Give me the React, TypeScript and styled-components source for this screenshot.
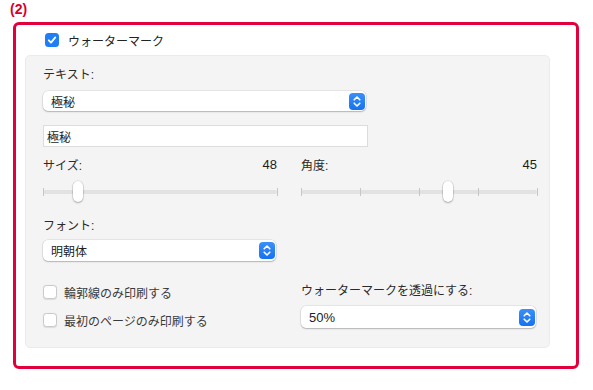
import { createGlobalStyle, styled } from "styled-components";

const GlobalStyle = createGlobalStyle`
  body {
    margin: 0;
    background: #ffffff;
    font-family: "Liberation Sans", "Noto Sans CJK JP", sans-serif;
    color: #262626;
  }
`;

const Page = styled.div`
  padding: 2px 0 0 10px;
`;

const StepLabel = styled.div`
  font-size: 14px;
  line-height: 14px;
  font-weight: 700;
  color: #d6002f;
`;

const Frame = styled.div`
  width: 525px;
  margin: 6px 0 0 3px;
  padding: 8px 26px 18px 9px;
  border: 3px solid #e2003c;
  border-radius: 6px;
`;

const HeaderRow = styled.label`
  display: flex;
  align-items: center;
  gap: 9px;
  padding-left: 20px;
  height: 14px;
  font-size: 12px;
  color: #222;
`;

const Panel = styled.div`
  margin-top: 8px;
  padding: 11px 12px 19px 17px;
  background: #f4f4f4;
  border: 1px solid #ebebeb;
  border-radius: 5px;
`;

const Label = styled.div`
  font-size: 12px;
  line-height: 16px;
  color: #2a2a2a;
`;

const SelectBox = styled.div<{ $width: number; $height?: number }>`
  display: flex;
  align-items: center;
  justify-content: space-between;
  width: ${(p) => p.$width}px;
  height: ${(p) => p.$height ?? 20}px;
  box-sizing: border-box;
  padding: 0 1px 0 8px;
  background: #fff;
  border-radius: 5px;
  box-shadow: 0 0 0 0.5px rgba(0, 0, 0, 0.12), 0 1px 1.5px rgba(0, 0, 0, 0.22);
  font-size: ${(p) => (p.$height && p.$height > 21 ? 13 : 12)}px;
  color: #222;
`;

const Stepper = styled.span`
  display: flex;
  align-items: center;
  justify-content: center;
  width: 16px;
  height: 17px;
  border-radius: 4px;
  background: linear-gradient(#3b8ff8, #1572f0);
`;

const TextField = styled.div`
  margin-top: 14px;
  width: 325px;
  height: 22px;
  box-sizing: border-box;
  padding-left: 3px;
  display: flex;
  align-items: center;
  background: #fff;
  border: 1px solid #dcdcdc;
  font-size: 12px;
  color: #222;
`;

const Columns = styled.div`
  display: grid;
  grid-template-columns: 234px 236px;
  column-gap: 24px;
`;

const Column = styled.div`
  display: flex;
  flex-direction: column;
`;

const ValueRow = styled.div`
  margin-top: 9px;
  display: flex;
  justify-content: space-between;
  align-items: center;
  height: 16px;
  font-size: 12px;
  color: #2a2a2a;
`;

const Value = styled.span`
  font-size: 13px;
  color: #1c1c1c;
`;

const SliderWrap = styled.div`
  position: relative;
  margin-top: 9px;
  height: 22px;
`;

const Track = styled.div`
  position: absolute;
  left: 0;
  right: 0;
  top: 9px;
  height: 4px;
  border-radius: 2px;
  background: #e2e2e2;
`;

const Tick = styled.div`
  position: absolute;
  top: 7px;
  width: 1px;
  height: 8px;
  margin-left: -0.5px;
  background: #c6c6c6;
`;

const Thumb = styled.div`
  position: absolute;
  top: 0;
  width: 10px;
  height: 21px;
  margin-left: -5px;
  border-radius: 5px;
  background: #fff;
  box-shadow: 0 0 0 0.5px rgba(0, 0, 0, 0.15), 0 1px 2px rgba(0, 0, 0, 0.25);
`;

const Spaced = styled.div<{ $top: number }>`
  margin-top: ${(p) => p.$top}px;
`;

const CheckRow = styled.label<{ $top: number }>`
  display: flex;
  align-items: center;
  gap: 7px;
  margin-top: ${(p) => p.$top}px;
  height: 16px;
  font-size: 12px;
  color: #3a3a3a;
`;

const Box = styled.span<{ $checked?: boolean }>`
  display: flex;
  align-items: center;
  justify-content: center;
  width: 14px;
  height: 14px;
  box-sizing: border-box;
  border-radius: 3.5px;
  background: ${(p) => (p.$checked ? "#1f7ef6" : "#fff")};
  border: ${(p) => (p.$checked ? "none" : "1px solid #c9c9c9")};
  box-shadow: ${(p) => (p.$checked ? "none" : "0 0.5px 1px rgba(0,0,0,0.1)")};
`;

const BottomGroup = styled.div`
  margin-top: auto;
`;

const StepIcon = () => (
  <svg width="10" height="13" viewBox="0 0 10 13" fill="none">
    <path d="M2.2 4.8 5 2l2.8 2.8M2.2 8.2 5 11l2.8-2.8" stroke="#fff" strokeWidth="1.6" strokeLinecap="round" strokeLinejoin="round" />
  </svg>
);

const Select = ({ value, width, height }: { value: string; width: number; height?: number }) => (
  <SelectBox $width={width} $height={height}>
    <span>{value}</span>
    <Stepper>
      <StepIcon />
    </Stepper>
  </SelectBox>
);

const Checkbox = ({ checked }: { checked?: boolean }) => (
  <Box $checked={checked}>
    {checked && (
      <svg width="10" height="10" viewBox="0 0 10 10" fill="none">
        <path d="M1.8 5.3 4 7.6 8.3 2.4" stroke="#fff" strokeWidth="1.8" strokeLinecap="round" strokeLinejoin="round" />
      </svg>
    )}
  </Box>
);

const Slider = ({ thumb, ticks }: { thumb: number; ticks: number }) => (
  <SliderWrap>
    <Track />
    {Array.from({ length: ticks }).map((_, i) => (
      <Tick key={i} style={{ left: `${(i / (ticks - 1)) * 100}%` }} />
    ))}
    <Thumb style={{ left: `${thumb * 100}%` }} />
  </SliderWrap>
);

function App() {
  return (
    <>
      <GlobalStyle />
      <Page>
        <StepLabel>(2)</StepLabel>
        <Frame>
          <HeaderRow>
            <Checkbox checked />
            ウォーターマーク
          </HeaderRow>
          <Panel>
            <Label>テキスト:</Label>
            <Spaced $top={8}>
              <Select value="極秘" width={323} />
            </Spaced>
            <TextField>極秘</TextField>
            <Columns>
              <Column>
                <ValueRow>
                  <span>サイズ:</span>
                  <Value>48</Value>
                </ValueRow>
                <Slider thumb={35 / 234} ticks={2} />
                <Spaced $top={15}>
                  <Label>フォント:</Label>
                </Spaced>
                <Spaced $top={6}>
                  <Select value="明朝体" width={233} height={21} />
                </Spaced>
                <CheckRow $top={23}>
                  <Checkbox />
                  輪郭線のみ印刷する
                </CheckRow>
                <CheckRow $top={12}>
                  <Checkbox />
                  最初のページのみ印刷する
                </CheckRow>
              </Column>
              <Column>
                <ValueRow>
                  <span>角度:</span>
                  <Value>45</Value>
                </ValueRow>
                <Slider thumb={146 / 234} ticks={5} />
                <BottomGroup>
                  <Label>ウォーターマークを透過にする:</Label>
                  <Spaced $top={7}>
                    <Select value="50%" width={235} height={22} />
                  </Spaced>
                </BottomGroup>
              </Column>
            </Columns>
          </Panel>
        </Frame>
      </Page>
    </>
  );
}

export default App;
